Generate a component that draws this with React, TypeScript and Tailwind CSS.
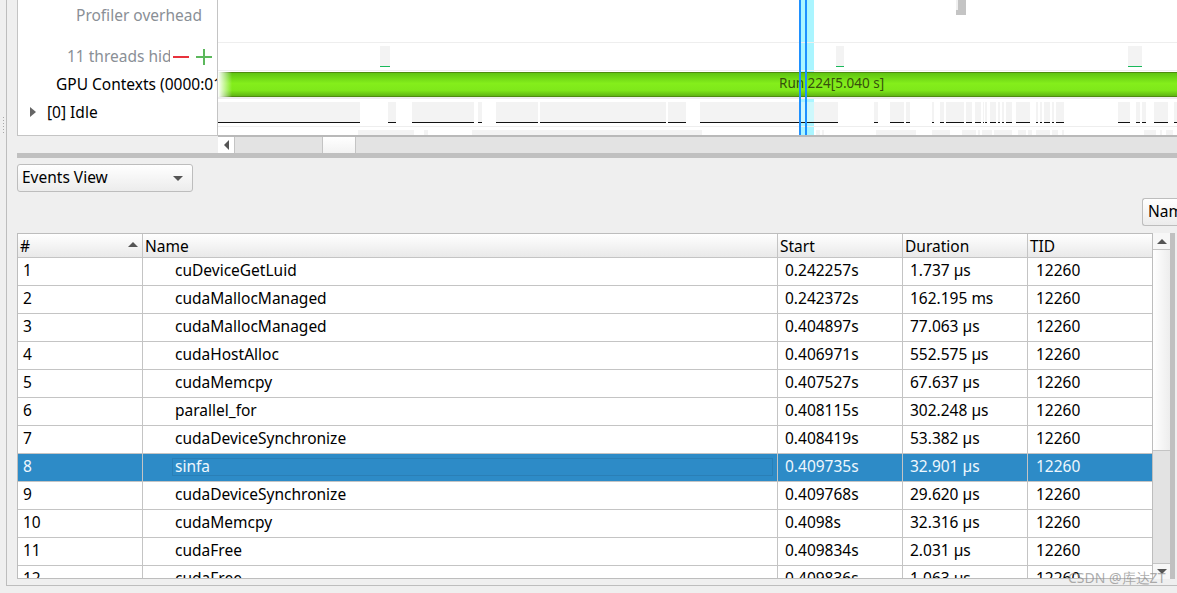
const FONT = "font-['Noto_Sans',sans-serif]";

const IDLE_SEGS = [
  [218, 360], [388, 396], [412, 474], [478, 482], [496, 538], [540, 666], [668, 686], [700, 838],
  [874, 878], [890, 904], [906, 910], [932, 934], [940, 944], [946, 964], [966, 972], [975, 981],
  [983, 984], [985, 987], [990, 996], [998, 1000], [1002, 1004], [1006, 1012], [1016, 1030],
  [1036, 1038], [1040, 1042], [1044, 1050], [1052, 1054], [1056, 1064], [1118, 1130], [1136, 1140],
  [1142, 1146], [1154, 1168], [1174, 1177],
];

const LOWER_SEGS = [
  [358, 414], [424, 428], [472, 702], [816, 820], [822, 824], [876, 916], [932, 950], [962, 976],
  [978, 980], [982, 992], [994, 1012], [1018, 1026], [1028, 1032], [1036, 1050], [1052, 1058],
  [1062, 1064], [1144, 1156], [1160, 1162], [1166, 1173],
];

const HIDDEN_MARKS = [[380, 390], [836, 844], [1128, 1142]];

const EVENTS = [
  ['1', 'cuDeviceGetLuid', '0.242257s', '1.737 µs'],
  ['2', 'cudaMallocManaged', '0.242372s', '162.195 ms'],
  ['3', 'cudaMallocManaged', '0.404897s', '77.063 µs'],
  ['4', 'cudaHostAlloc', '0.406971s', '552.575 µs'],
  ['5', 'cudaMemcpy', '0.407527s', '67.637 µs'],
  ['6', 'parallel_for', '0.408115s', '302.248 µs'],
  ['7', 'cudaDeviceSynchronize', '0.408419s', '53.382 µs'],
  ['8', 'sinfa', '0.409735s', '32.901 µs'],
  ['9', 'cudaDeviceSynchronize', '0.409768s', '29.620 µs'],
  ['10', 'cudaMemcpy', '0.4098s', '32.316 µs'],
  ['11', 'cudaFree', '0.409834s', '2.031 µs'],
  ['12', 'cudaFree', '0.409836s', '1.063 µs'],
];

/** Track marks, drawn in page pixels minus the 218px the label column takes. */
function TimelineMarks() {
  return (
    <svg width="959" height="135" className="block" shapeRendering="crispEdges">
      <rect x="582" y="0" width="14" height="135" fill="#aaf5ff" />
      <rect x="0" y="42" width="959" height="1" fill="#eeeeee" />
      <rect x="0" y="70" width="959" height="1" fill="#eeeeee" />
      <rect x="0" y="97" width="959" height="2" fill="#eeeeee" />
      <rect x="0" y="126" width="959" height="1" fill="#eeeeee" />
      <rect x="738" y="0" width="10" height="15" fill="#c4c4c4" />
      <rect x="738" y="0" width="2" height="10" fill="#f0f0f0" />
      {HIDDEN_MARKS.map(([a, b]) => (
        <g key={a}>
          <rect x={a - 218} y="46" width={b - a} height="20" fill="#f3f3f3" />
          <rect x={a - 218} y="66" width={b - a} height="1" fill="#19b95b" />
        </g>
      ))}
      {IDLE_SEGS.map(([a, b]) => (
        <g key={a}>
          <rect x={a - 218} y="102" width={b - a} height="20" fill="#f3f3f3" />
          <rect x={a - 218} y="122" width={b - a} height="1" fill="#111111" />
        </g>
      ))}
      <rect x="582" y="102" width="14" height="20" fill="#cdf8fc" />
      <rect x="582" y="122" width="14" height="1" fill="#111111" />
      {LOWER_SEGS.map(([a, b]) => (
        <rect key={a} x={a - 218} y="130" width={b - a} height="5" fill="#f3f3f3" />
      ))}
    </svg>
  );
}

function Timeline() {
  return (
    <div className="flex h-[137px] items-start">
      <div className="h-[136px] w-[201px] shrink-0 overflow-hidden border-x border-b border-[#c4c4c4] bg-white text-[15.5px] leading-5">
        <div className="flex h-[43px] justify-end pr-[15px] pt-[5px] text-[#8a8f96]">Profiler overhead</div>
        <div className="flex h-[28px] items-center justify-end pr-[4px] text-[#8a8f96]">
          <span className="-mt-[2px] mr-[3px] w-[103px] overflow-hidden whitespace-nowrap">11 threads hidden</span>
          <svg width="40" height="20" viewBox="0 0 40 20" className="shrink-0" shapeRendering="crispEdges">
            <rect x="0" y="9" width="16" height="2" fill="#e8323c" />
            <rect x="23" y="9" width="16" height="2" fill="#5cb85c" />
            <rect x="30" y="2" width="2" height="16" fill="#5cb85c" />
          </svg>
        </div>
        <div className="h-[28px] whitespace-nowrap pl-[38px] pt-[3px] text-black">GPU Contexts (0000:01:00.0)</div>
        <div className="flex h-[28px] items-center pb-[2px] pl-[12px] text-black">
          <span className="mr-[11px] h-0 w-0 border-y-[5px] border-l-[6px] border-y-transparent border-l-[#666666]" />
          [0] Idle
        </div>
      </div>
      <div className="relative h-[137px] min-w-0 flex-1 overflow-hidden border-b-2 border-[#b9b9b9] bg-white">
        <TimelineMarks />
        <div className="absolute left-0 right-0 top-[72px] flex h-[25px] items-center border-y border-[#4f8a10] bg-[linear-gradient(#5fc413,#84ee1b_45%,#7fe81a_75%,#5fb512)] pb-[2px] pl-[561px] text-[13.5px] text-[#36500c]">
          Run 224[5.040 s]
        </div>
        <div className="absolute left-0 top-[72px] h-[25px] w-[14px] bg-gradient-to-r from-white to-transparent" />
        <div className="absolute bottom-0 left-[581px] top-0 flex">
          <span className="w-[2px] bg-[#1e90ff]" />
          <span className="ml-[4px] w-[2px] bg-[#1e90ff]" />
        </div>
      </div>
    </div>
  );
}

function HorizontalScrollbar() {
  return (
    <div className="flex h-[16px] pl-[201px]">
      <div className="flex w-[17px] items-center justify-center border-r border-[#c4c4c4] bg-white">
        <span className="h-0 w-0 border-y-[5px] border-r-[5px] border-y-transparent border-r-[#555555]" />
      </div>
      <div className="w-[87px] bg-[#e3e3e3]" />
      <div className="w-[34px] border-x border-[#c4c4c4] bg-gradient-to-b from-white to-[#f2f2f2]" />
      <div className="flex-1 bg-[#e3e3e3]" />
    </div>
  );
}

function Toolbar() {
  return (
    <>
      <div className="pt-[6px]">
        <div className="flex h-[28px] w-[176px] items-center justify-between rounded-[3px] border border-[#bdbdbd] bg-gradient-to-b from-white to-[#ececec] pl-[4px] pr-[9px] text-[15.5px] text-black">
          <span>Events View</span>
          <span className="h-0 w-0 border-x-[5px] border-t-[5px] border-x-transparent border-t-[#555555]" />
        </div>
      </div>
      <div className="flex h-[41px] justify-end overflow-hidden pt-[6px]">
        <div className="flex h-[28px] w-[35px] items-center overflow-hidden rounded-l-[3px] border-y border-l border-[#bdbdbd] bg-gradient-to-b from-white to-[#ececec] pl-[5px] text-[15.5px] text-black">
          <span className="-mt-[1px]">Name</span>
        </div>
      </div>
    </>
  );
}

function EventsTable() {
  const cols = 'grid grid-cols-[125px_635px_125px_125px_125px]';
  return (
    <div className="flex h-[346px]">
      <div className="w-[1136px] min-w-0 overflow-hidden border border-[#bdbdbd] bg-white text-[15.5px] text-black">
        <div className={`${cols} h-[24px] border-b border-[#c4c4c4] bg-gradient-to-b from-white to-[#e9e9e9] leading-[25px]`}>
          <div className="relative border-r border-[#c4c4c4] pl-[2px]">
            #
            <span className="absolute right-[4px] top-[8px] h-0 w-0 border-x-[5px] border-b-[5px] border-x-transparent border-b-[#555555]" />
          </div>
          <div className="border-r border-[#c4c4c4] pl-[2px]">Name</div>
          <div className="border-r border-[#c4c4c4] pl-[2px]">Start</div>
          <div className="border-r border-[#c4c4c4] pl-[2px]">Duration</div>
          <div className="pl-[2px]">TID</div>
        </div>
        {EVENTS.map(([id, name, start, duration]) => {
          const selected = id === '8';
          return (
            <div
              key={id}
              className={`${cols} h-[28px] border-b border-[#c4c4c4] leading-[24px] ${selected ? 'bg-[#2d8bc7] text-[#eef7fd]' : ''}`}
            >
              <div className="border-r border-[#c4c4c4] pl-[5px]">{id}</div>
              <div className="border-r border-[#c4c4c4] pl-[29px] pr-[4px]">
                <div className={`mt-[4px] h-[18px] border pl-[2px] leading-[14px] ${selected ? 'border-[#2a7fb6]' : 'border-transparent'}`}>
                  {name}
                </div>
              </div>
              <div className="border-r border-[#c4c4c4] pl-[7px]">{start}</div>
              <div className="border-r border-[#c4c4c4] pl-[7px]">{duration}</div>
              <div className="pl-[8px]">12260</div>
            </div>
          );
        })}
      </div>
      <div className="flex w-[17px] flex-col bg-[#e3e3e3]">
        <div className="flex h-[17px] items-center justify-center border-b border-[#c4c4c4] bg-[#f7f7f7]">
          <span className="h-0 w-0 border-x-[5px] border-b-[5px] border-x-transparent border-b-[#555555]" />
        </div>
        <div className="h-[201px] border-b border-[#c4c4c4] bg-gradient-to-r from-white to-[#ededed]" />
        <div className="flex-1" />
        <div className="flex h-[16px] items-center justify-center border-t border-[#c4c4c4] bg-[#f7f7f7]">
          <span className="h-0 w-0 border-x-[5px] border-t-[5px] border-x-transparent border-t-[#555555]" />
        </div>
      </div>
      <div className="w-[5px] bg-[#c0c0c0]" />
    </div>
  );
}

export default function App() {
  return (
    <div className={`relative flex h-[593px] w-[1177px] items-start overflow-hidden bg-[#efefef] ${FONT}`}>
      <div className="flex w-[6px] shrink-0 flex-col items-center gap-[2px] pt-[117px]">
        {[0, 1, 2, 3, 4, 5].map((i) => (
          <span key={i} className="h-px w-px bg-[#a8a8a8]" />
        ))}
      </div>
      <div className="h-[586px] min-w-0 flex-1 border-b border-l border-[#bdbdbd] pl-[10px]">
        <Timeline />
        <HorizontalScrollbar />
        <div className="h-[5px] bg-[#c0c0c0]" />
        <Toolbar />
        <EventsTable />
      </div>
      <div className="absolute left-[1068px] top-[569px] text-[14px] leading-[18px] text-[#8a8a8a]/70">
        CSDN @库达ZT
      </div>
    </div>
  );
}
